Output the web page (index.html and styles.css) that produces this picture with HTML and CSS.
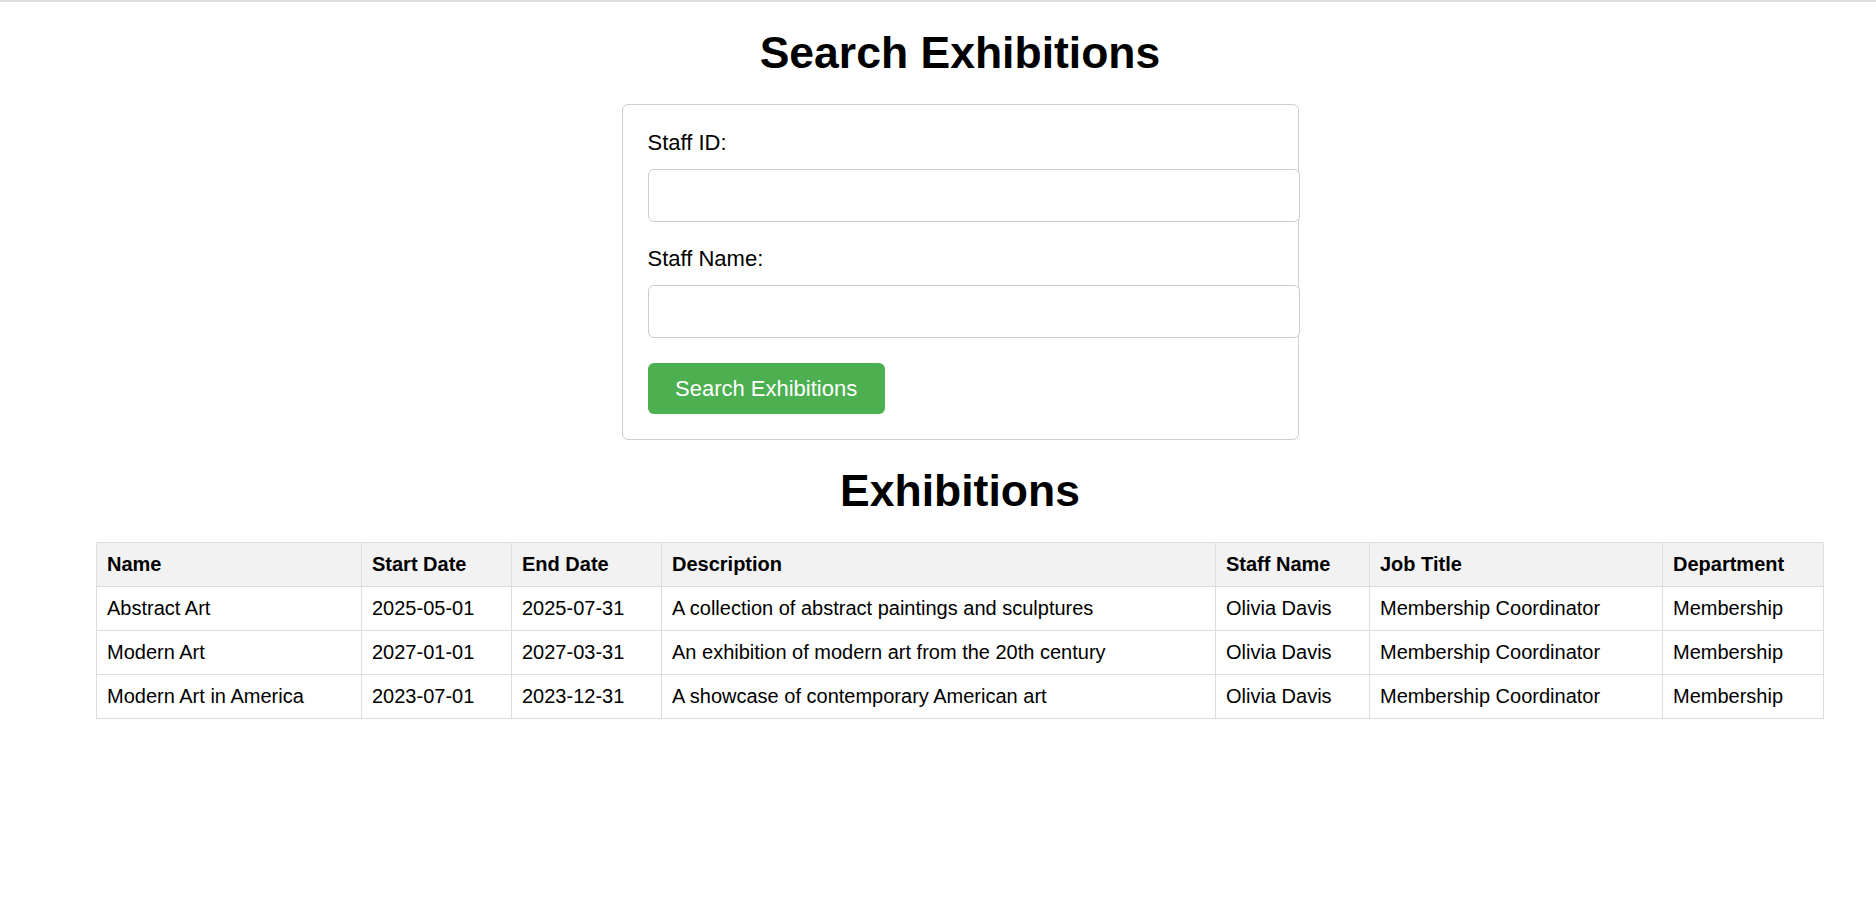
FILE: index.html
```html
<!DOCTYPE html>
<html lang="en">
<head>
<meta charset="utf-8">
<title>Search Exhibitions</title>
<link rel="stylesheet" href="styles.css">
</head>
<body>
<div class="topline"></div>
<div class="page">
  <h1 class="title">Search Exhibitions</h1>
  <form class="card">
    <label class="field-label" for="staff-id">Staff ID:</label>
    <input class="field-input" type="text" id="staff-id">
    <label class="field-label" for="staff-name">Staff Name:</label>
    <input class="field-input" type="text" id="staff-name">
    <button class="btn" type="button">Search Exhibitions</button>
  </form>
  <h2 class="title">Exhibitions</h2>
  <table class="grid">
    <colgroup>
      <col class="c-name"><col class="c-start"><col class="c-end"><col class="c-desc"><col class="c-staff"><col class="c-job"><col class="c-dept">
    </colgroup>
    <thead>
      <tr><th>Name</th><th>Start Date</th><th>End Date</th><th>Description</th><th>Staff Name</th><th>Job Title</th><th>Department</th></tr>
    </thead>
    <tbody>
      <tr><td>Abstract Art</td><td>2025-05-01</td><td>2025-07-31</td><td>A collection of abstract paintings and sculptures</td><td>Olivia Davis</td><td>Membership Coordinator</td><td>Membership</td></tr>
      <tr><td>Modern Art</td><td>2027-01-01</td><td>2027-03-31</td><td>An exhibition of modern art from the 20th century</td><td>Olivia Davis</td><td>Membership Coordinator</td><td>Membership</td></tr>
      <tr><td>Modern Art in America</td><td>2023-07-01</td><td>2023-12-31</td><td>A showcase of contemporary American art</td><td>Olivia Davis</td><td>Membership Coordinator</td><td>Membership</td></tr>
    </tbody>
  </table>
</div>
</body>
</html>
```
FILE: styles.css
```css
html, body {
  margin: 0;
  padding: 0;
  overflow-x: hidden;
  background: #fff;
}
body {
  font-family: "Liberation Sans", Arial, sans-serif;
  color: #000;
}
.topline {
  height: 2px;
  background: #dcdcdc;
}
.page {
  width: 1920px;
  display: flex;
  flex-direction: column;
  align-items: center;
}
.title {
  margin: 25px 0 26px;
  font-size: 44.5px;
  line-height: 51px;
  font-weight: bold;
  text-align: center;
}
h2.title {
  margin: 25px 0 26px;
}
.card {
  width: 625px;
  padding: 25px;
  border: 1px solid #cfcfcf;
  border-radius: 6px;
  display: flex;
  flex-direction: column;
  align-items: flex-start;
}
.field-label {
  font-size: 22px;
  line-height: 25px;
  margin-bottom: 14px;
}
.field-input {
  box-sizing: content-box;
  width: 100%;
  height: 26px;
  padding: 12.5px;
  margin: 0 0 24px;
  border: 1px solid #cccccc;
  border-radius: 6px;
  font-family: inherit;
  font-size: 20px;
  background: #fff;
}
.btn {
  margin-top: 1px;
  background: #4caf50;
  color: #fff;
  border: none;
  border-radius: 6px;
  font-family: inherit;
  font-size: 22px;
  line-height: 26px;
  padding: 12.5px 27.5px;
  cursor: pointer;
}
.grid {
  width: 1727px;
  table-layout: fixed;
  border-collapse: collapse;
  font-size: 20px;
  line-height: 23px;
}
.grid th, .grid td {
  border: 1px solid #dddddd;
  padding: 10px;
  text-align: left;
  white-space: nowrap;
}
.grid th {
  background: #f2f2f2;
  font-weight: bold;
}
.c-name { width: 265px; }
.c-start { width: 150px; }
.c-end { width: 150px; }
.c-desc { width: 554px; }
.c-staff { width: 154px; }
.c-job { width: 293px; }
.c-dept { width: 161px; }
```
